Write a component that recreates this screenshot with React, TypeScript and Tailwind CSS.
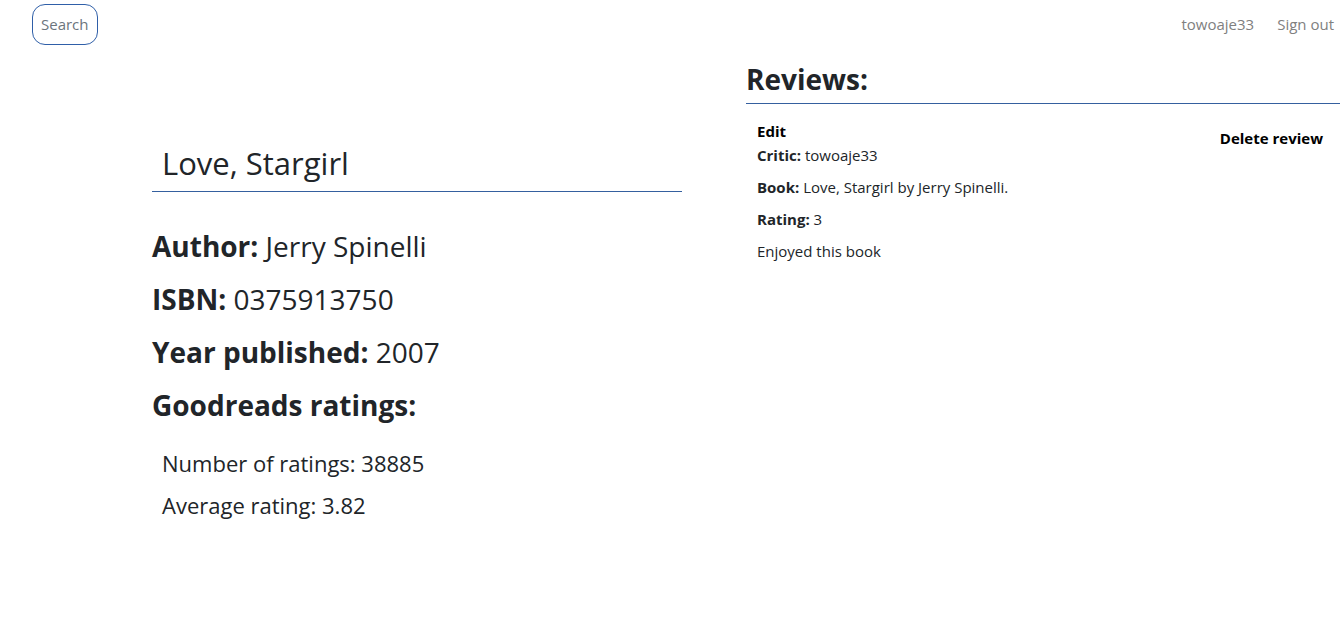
export default function App() {
  return (
    <div className="min-h-[639px] bg-white text-[#212529] font-['Open_Sans','Noto_Sans',sans-serif]">
      <nav className="flex items-center justify-between h-[49px] pl-[32px] pr-[6px]">
        <button className="h-[41px] px-[8px] rounded-[13px] border border-[#2f5fa8] text-[#6c757d] text-[15px] leading-none">
          Search
        </button>
        <div className="flex gap-[23px] text-[15px] text-[#808080]">
          <a>towoaje33</a>
          <a>Sign out</a>
        </div>
      </nav>

      <div className="flex">
        <div className="w-[682px] pl-[152px] pt-[97px]">
          <div className="border-b border-[#35609f] pl-[10px] pb-[11px]">
            <h1 className="text-[31px] leading-[34px] font-medium">Love, Stargirl</h1>
          </div>
          <div className="pt-[37px]">
            <h3 className="text-[28px] leading-[34px] mb-[19px]">
              <b>Author:</b> Jerry Spinelli
            </h3>
            <h3 className="text-[28px] leading-[34px] mb-[19px]">
              <b>ISBN:</b> 0375913750
            </h3>
            <h3 className="text-[28px] leading-[34px] mb-[19px]">
              <b>Year published:</b> 2007
            </h3>
            <h3 className="text-[28px] leading-[34px] font-bold mb-[26px]">Goodreads ratings:</h3>
            <div className="pl-[10px] text-[22px]">
              <p className="leading-[30px] mb-[12px]">Number of ratings: 38885</p>
              <p className="leading-[30px]">Average rating: 3.82</p>
            </div>
          </div>
        </div>

        <div className="flex-1 ml-[64px] pt-[11px]">
          <div className="border-b border-[#35609f] pb-[5px]">
            <h2 className="text-[28px] leading-[38px] font-bold">Reviews:</h2>
          </div>
          <div className="flex justify-between pl-[11px] pr-[17px] pt-[17px] text-[15px]">
            <div>
              <p className="font-bold leading-[21px] mb-[3px] text-black">Edit</p>
              <p className="leading-[21px] mb-[11px]">
                <b>Critic:</b> towoaje33
              </p>
              <p className="leading-[21px] mb-[11px]">
                <b>Book:</b> Love, Stargirl by Jerry Spinelli.
              </p>
              <p className="leading-[21px] mb-[11px]">
                <b>Rating:</b> 3
              </p>
              <p className="leading-[21px]">Enjoyed this book</p>
            </div>
            <p className="font-bold leading-[21px] mt-[7px] text-black">Delete review</p>
          </div>
        </div>
      </div>
    </div>
  );
}
